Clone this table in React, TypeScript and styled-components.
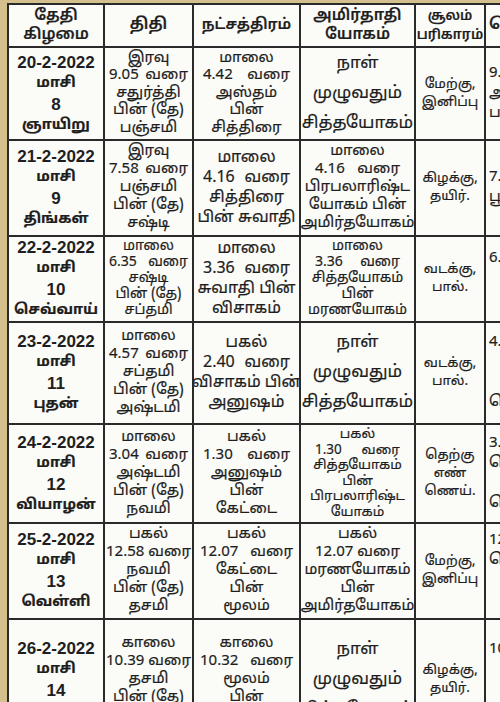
import React from 'react'
import styled, { createGlobalStyle } from 'styled-components'

const GlobalStyle = createGlobalStyle`
  html, body {
    margin: 0;
    padding: 0;
    background: #d3c08c;
    overflow: hidden;
  }
  body {
    font-family: "Noto Sans Tamil", "Noto Sans", "Lohit Tamil", sans-serif;
    color: #1e1e1e;
  }
`

const Page = styled.div`
  width: 500px;
  height: 702px;
  padding: 3px 0 0 7px;
  box-sizing: border-box;
  overflow: hidden;
`

const Table = styled.div`
  display: grid;
  grid-template-columns: 94px 87px 105px 113px 68px 90px;
  grid-template-rows: 41px 91px 94px 84px 100px 97px 94px 120px;
  gap: 2px;
  padding: 2px;
  width: max-content;
  background: #2a2a2a;
`

const Cell = styled.div<{ $size: number; $line: number; $weight?: number; $left?: boolean; $pad?: number }>`
  background: #fbfbf8;
  display: flex;
  flex-direction: column;
  justify-content: center;
  align-items: ${(p) => (p.$left ? 'flex-start' : 'center')};
  text-align: ${(p) => (p.$left ? 'left' : 'center')};
  padding: ${(p) => (p.$left ? '0 0 0 3px' : `0 ${p.$pad ?? 2}px`)};
  font-size: ${(p) => p.$size}px;
  line-height: ${(p) => p.$line}px;
  font-weight: ${(p) => p.$weight ?? 400};
  -webkit-text-stroke: 0.2px currentColor;
  overflow: hidden;
  white-space: nowrap;
`

const DateText = styled.span`
  font-family: "Liberation Sans", Arial, sans-serif;
  font-weight: 700;
  font-size: 17px;
  -webkit-text-stroke: 0;
`

const DayText = styled.span`
  font-size: 14.5px;
  font-weight: 700;
`

const Line = styled.span`
  display: block;
`

const SpreadLine = styled.span`
  display: flex;
  justify-content: space-between;
  align-self: stretch;
`

type Row = {
  height: number
  date: string
  num: string
  day: string
  tithi: string[]
  star: string[]
  yogam: string[]
  soolam: string[]
  last: string[]
}

const rows: Row[] = [
  {
    height: 91,
    date: '20-2-2022',
    num: '8',
    day: 'ஞாயிறு',
    tithi: ['இரவு', '9.05 வரை', 'சதுர்த்தி', 'பின் (தே)', 'பஞ்சமி'],
    star: ['மாலை', '4.42 வரை', 'அஸ்தம்', 'பின்', 'சித்திரை'],
    yogam: ['நாள்', 'முழுவதும்', 'சித்தயோகம்'],
    soolam: ['மேற்கு,', 'இனிப்பு'],
    last: ['9.30', 'அதிகாலை', 'பகல்'],
  },
  {
    height: 94,
    date: '21-2-2022',
    num: '9',
    day: 'திங்கள்',
    tithi: ['இரவு', '7.58 வரை', 'பஞ்சமி', 'பின் (தே)', 'சஷ்டி'],
    star: ['மாலை', '4.16 வரை', 'சித்திரை', 'பின் சுவாதி'],
    yogam: ['மாலை', '4.16 வரை', 'பிரபலாரிஷ்ட', 'யோகம் பின்', 'அமிர்தயோகம்'],
    soolam: ['கிழக்கு,', 'தயிர்.'],
    last: ['7.30', 'பூ'],
  },
  {
    height: 84,
    date: '22-2-2022',
    num: '10',
    day: 'செவ்வாய்',
    tithi: ['மாலை', '6.35 வரை', 'சஷ்டி', 'பின் (தே)', 'சப்தமி'],
    star: ['மாலை', '3.36 வரை', 'சுவாதி பின்', 'விசாகம்'],
    yogam: ['மாலை', '3.36 வரை', 'சித்தயோகம்', 'பின்', 'மரணயோகம்'],
    soolam: ['வடக்கு,', 'பால்.'],
    last: ['6.30', '', ''],
  },
  {
    height: 100,
    date: '23-2-2022',
    num: '11',
    day: 'புதன்',
    tithi: ['மாலை', '4.57 வரை', 'சப்தமி', 'பின் (தே)', 'அஷ்டமி'],
    star: ['பகல்', '2.40 வரை', 'விசாகம் பின்', 'அனுஷம்'],
    yogam: ['நாள்', 'முழுவதும்', 'சித்தயோகம்'],
    soolam: ['வடக்கு,', 'பால்.'],
    last: ['4.30', '', '', 'கௌரி'],
  },
  {
    height: 97,
    date: '24-2-2022',
    num: '12',
    day: 'வியாழன்',
    tithi: ['மாலை', '3.04 வரை', 'அஷ்டமி', 'பின் (தே)', 'நவமி'],
    star: ['பகல்', '1.30 வரை', 'அனுஷம்', 'பின்', 'கேட்டை'],
    yogam: ['பகல்', '1.30 வரை', 'சித்தயோகம்', 'பின்', 'பிரபலாரிஷ்ட', 'யோகம்'],
    soolam: ['தெற்கு', 'எண்', 'ணெய்.'],
    last: ['3.30', 'கௌரி', '', 'கௌரி'],
  },
  {
    height: 94,
    date: '25-2-2022',
    num: '13',
    day: 'வெள்ளி',
    tithi: ['பகல்', '12.58 வரை', 'நவமி', 'பின் (தே)', 'தசமி'],
    star: ['பகல்', '12.07 வரை', 'கேட்டை', 'பின்', 'மூலம்'],
    yogam: ['பகல்', '12.07 வரை', 'மரணயோகம்', 'பின்', 'அமிர்தயோகம்'],
    soolam: ['மேற்கு,', 'இனிப்பு'],
    last: ['12.30', 'கௌரி', '', ''],
  },
  {
    height: 120,
    date: '26-2-2022',
    num: '14',
    day: 'சனி',
    tithi: ['காலை', '10.39 வரை', 'தசமி', 'பின் (தே)', 'ஏகாதசி'],
    star: ['காலை', '10.32 வரை', 'மூலம்', 'பின்', 'பூராடம்'],
    yogam: ['நாள்', 'முழுவதும்', 'சித்தயோகம்'],
    soolam: ['கிழக்கு,', 'தயிர்.'],
    last: ['10.30', '', '', ''],
  },
]

const lines = (items: string[], spread = true) =>
  items.map((t, i) => {
    if (spread && t.endsWith(' வரை')) {
      const [a, b] = t.split(' ')
      return (
        <SpreadLine key={i}>
          <span>{a}</span>
          <span>{b}</span>
        </SpreadLine>
      )
    }
    return <Line key={i}>{t || '\u00a0'}</Line>
  })

// font size / line height by how many lines a cell holds and how tall its row is
const fit = (n: number, height: number): [number, number] => {
  if (n <= 3) return [17, 20]
  const line = Math.min(n === 4 ? 20 : 18, (height - 4) / n)
  return [Math.min(n === 4 ? 16 : 15, line - 2), line]
}

const App = () => {
  return (
    <Page>
      <GlobalStyle />
      <Table>
        <Cell $size={15.5} $line={19} $weight={600}>
          {lines(['தேதி', 'கிழமை'])}
        </Cell>
        <Cell $size={16} $line={19} $weight={600}>
          {lines(['திதி'])}
        </Cell>
        <Cell $size={15} $line={19} $weight={600}>
          {lines(['நட்சத்திரம்'])}
        </Cell>
        <Cell $size={15.5} $line={19} $weight={600}>
          {lines(['அமிர்தாதி', 'யோகம்'])}
        </Cell>
        <Cell $size={13.5} $line={19} $weight={600}>
          {lines(['சூலம்', 'பரிகாரம்'])}
        </Cell>
        <Cell $size={16} $line={19} $weight={600} $left>
          {lines(['கௌரி'])}
        </Cell>
        {rows.map((r) => {
          const [ts, tl] = fit(r.tithi.length, r.height)
          const [ss, sl] = fit(r.star.length, r.height)
          const [ys, yl] = fit(r.yogam.length, r.height)
          const yogamBig = r.yogam.length <= 3
          return (
            <React.Fragment key={r.date}>
              <Cell $size={15} $line={21}>
                <DateText>{r.date}</DateText>
                <DayText>மாசி</DayText>
                <DateText>{r.num}</DateText>
                <DayText>{r.day}</DayText>
              </Cell>
              <Cell $size={ts} $line={tl} $pad={r.tithi[1].length > 8 ? 1 : 4}>
                {lines(r.tithi)}
              </Cell>
              <Cell $size={ss} $line={sl} $pad={r.star[1].length > 8 ? 6 : 9}>
                {lines(r.star)}
              </Cell>
              <Cell $size={yogamBig ? 17 : ys} $line={yogamBig ? 30 : yl} $pad={14}>
                {lines(r.yogam)}
              </Cell>
              <Cell $size={13.5} $line={18}>
                {lines(r.soolam)}
              </Cell>
              <Cell $size={15} $line={20} $left>
                {lines(r.last)}
              </Cell>
            </React.Fragment>
          )
        })}
      </Table>
    </Page>
  )
}

export default App
